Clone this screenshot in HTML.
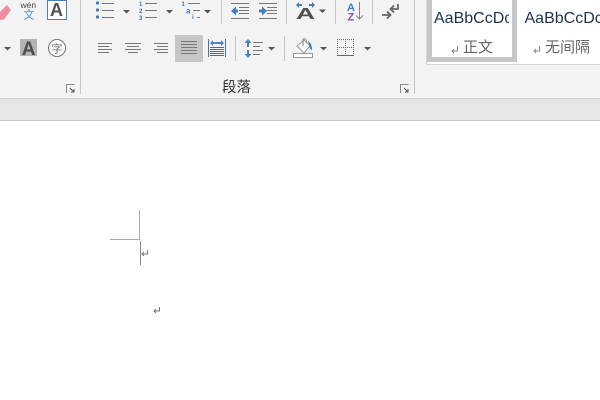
<!DOCTYPE html>
<html><head><meta charset="utf-8">
<style>
html,body{margin:0;padding:0;background:#fff;width:600px;height:400px;overflow:hidden}
svg{display:block}
text{font-family:"Liberation Sans","Noto Sans CJK SC",sans-serif}
</style></head>
<body>
<svg width="600" height="400" viewBox="0 0 600 400" xmlns="http://www.w3.org/2000/svg">
<defs>
<clipPath id="c1"><rect x="432" y="0" width="77" height="40"/></clipPath>
<clipPath id="c2"><rect x="522" y="0" width="78" height="40"/></clipPath>
</defs>
<rect width="600" height="400" fill="#fff"/>
<rect width="600" height="98" fill="#f3f3f3"/>
<rect y="98" width="600" height="1" fill="#d4d4d4"/>
<rect y="99" width="600" height="21" fill="#e6e6e6"/>
<rect y="120" width="600" height="1" fill="#c6c6c6"/>

<!-- separators -->
<g fill="#c6c6c6">
<rect x="80" y="0" width="1" height="94"/>
<rect x="414" y="0" width="1" height="94"/>
<rect x="221" y="0" width="1" height="24"/>
<rect x="286" y="0" width="1" height="24"/>
<rect x="335" y="0" width="1" height="24"/>
<rect x="372" y="0" width="1" height="24"/>
<rect x="235" y="36" width="1" height="25"/>
<rect x="284" y="36" width="1" height="25"/>
</g>

<!-- eraser -->
<path d="M0 12L7 5L11 10L4 19.500L0 20Z" fill="#ee8da0"/>
<!-- wen -->
<text x="20.500" y="8" font-size="8.500" fill="#444">wén</text>
<text x="23.500" y="18.500" font-size="11" fill="#5a90cc" font-family="Noto Sans CJK SC">文</text>
<!-- A box -->
<rect x="47.500" y="0.500" width="19" height="19" fill="#fff" stroke="#4a7ebb"/>
<text x="50" y="16" font-size="18" font-weight="bold" fill="#505050">A</text>
<!-- row 2 left -->
<path d="M4 47h7l-3.500 3.500z" fill="#555"/>
<rect x="20" y="39" width="17" height="17" fill="#b4b4b4"/>
<text x="21.700" y="55" font-size="19" font-weight="bold" fill="#4c4c4c">A</text>
<circle cx="57" cy="48" r="8.500" fill="#fff" stroke="#777" stroke-width="1"/>
<text x="51.500" y="52.500" font-size="11" fill="#666" font-family="Noto Sans CJK SC">字</text>
<!-- launcher -->
<g fill="none" stroke="#888">
<path d="M66.500 93v-8.500h8"/><path d="M400.500 93v-8.500h8"/>
</g>
<g fill="none" stroke="#555"><path d="M70 88l4 4M74 89v3h-3"/><path d="M404 88l4 4M408 89v3h-3"/></g>

<!-- bullets -->
<g fill="#3f78b5"><circle cx="97.500" cy="3" r="1.600"/><circle cx="97.500" cy="10" r="1.600"/><circle cx="97.500" cy="17" r="1.600"/></g>
<g fill="#777">
<rect x="102" y="3" width="12" height="1"/><rect x="102" y="10" width="12" height="1"/><rect x="102" y="17" width="12" height="1"/>
<rect x="145" y="3" width="12" height="1"/><rect x="145" y="10" width="12" height="1"/><rect x="145" y="17" width="12" height="1"/>
<rect x="188" y="3" width="12" height="1"/><rect x="193" y="10" width="7" height="1"/><rect x="197" y="17" width="3" height="1"/>
</g>
<g fill="#555">
<path d="M123 10h7l-3.500 3.500z"/>
<path d="M166 10h7l-3.500 3.500z"/>
<path d="M204 10h7l-3.500 3.500z"/>
</g>
<g fill="#3f78b5" font-weight="bold">
<text x="139" y="6" font-size="6">1</text><text x="139" y="13" font-size="6">2</text><text x="139" y="20" font-size="6">3</text>
<text x="181.500" y="6" font-size="6">1</text><text x="186" y="13.500" font-size="8">a</text><text x="192" y="19" font-size="6">i</text>
</g>

<!-- indent -->
<g fill="#777">
<rect x="231" y="3" width="18" height="1"/><rect x="239" y="7" width="10" height="1"/><rect x="239" y="10" width="10" height="1"/><rect x="239" y="13" width="10" height="1"/><rect x="231" y="18" width="18" height="1"/>
<rect x="259" y="3" width="18" height="1"/><rect x="267" y="7" width="10" height="1"/><rect x="267" y="10" width="10" height="1"/><rect x="267" y="13" width="10" height="1"/><rect x="259" y="18" width="18" height="1"/>
</g>
<path d="M231 11l5-4.500v3h2v3h-2v3z" fill="#3f7fc0"/>
<path d="M267 11l-5-4.500v3h-3v3h3v3z" fill="#3f7fc0"/>

<!-- A with arrows -->
<text x="296" y="19" font-size="16" font-weight="bold" fill="#505050" textLength="19" lengthAdjust="spacingAndGlyphs">A</text>
<path d="M296 5l3-3v2h3v2h-3v2zM315 5l-3-3v2h-3v2h3v2z" fill="#3f7fc0"/>
<path d="M319 9.500h7l-3.500 3.500z" fill="#555"/>

<!-- AZ sort -->
<text x="347" y="11" font-size="11" font-weight="bold" fill="#3f7fc0">A</text>
<text x="347.500" y="20.500" font-size="11" font-weight="bold" fill="#8a4fb0">Z</text>
<path d="M359.500 2v17M356 15.500l3.500 3.500 3.500-3.500" fill="none" stroke="#888"/>
<!-- pilcrow arrows -->
<path d="M398 4v5h-7M394 5.500l-3.500 3.500 3.500 3.500" fill="none" stroke="#666" stroke-width="1.800"/>
<path d="M382 15h8M387 11.500l3.500 3.500-3.500 3.500" fill="none" stroke="#666" stroke-width="1.800"/>

<!-- align -->
<rect x="175" y="35" width="28" height="27" fill="#c6c6c6"/>
<g fill="#777">
<rect x="98" y="43" width="14" height="1"/><rect x="98" y="46" width="11" height="1"/><rect x="98" y="49" width="14" height="1"/><rect x="98" y="52" width="11" height="1"/>
<rect x="125" y="43" width="16" height="1"/><rect x="127" y="46" width="12" height="1"/><rect x="125" y="49" width="16" height="1"/><rect x="128" y="52" width="10" height="1"/>
<rect x="154" y="43" width="14" height="1"/><rect x="157" y="46" width="11" height="1"/><rect x="154" y="49" width="14" height="1"/><rect x="157" y="52" width="11" height="1"/>
<rect x="181" y="41" width="16" height="1"/><rect x="181" y="44" width="16" height="1"/><rect x="181" y="47" width="16" height="1"/><rect x="181" y="50" width="16" height="1"/><rect x="181" y="53" width="16" height="1"/>
</g>
<!-- distributed -->
<rect x="208" y="39" width="1" height="18" fill="#3f78b5"/><rect x="225" y="39" width="1" height="18" fill="#3f78b5"/>
<path d="M210 43l3-3v2h8v-2l3 3-3 3v-2h-8v2z" fill="#4a86c5"/>
<g fill="#666"><rect x="210" y="47" width="14" height="1"/><rect x="210" y="49" width="14" height="1"/><rect x="210" y="51" width="14" height="1"/><rect x="210" y="53" width="14" height="1"/><rect x="210" y="55" width="14" height="1"/></g>
<!-- line spacing -->
<path d="M248 39l-3.500 4h2.500v4h2v-4h2.500zM248 58l-3.500-4h2.500v-4h2v4h2.500z" fill="#4a86c5"/>
<g fill="#777"><rect x="253" y="42" width="10" height="1"/><rect x="253" y="46" width="7" height="1"/><rect x="253" y="50" width="10" height="1"/><rect x="253" y="54" width="7" height="1"/></g>
<path d="M268 47h7l-3.500 3.500z" fill="#555"/>
<!-- fill -->
<path d="M297 46l7-6 6 6-6 7z" fill="#fff" stroke="#999"/>
<path d="M303 39v7" stroke="#777" fill="none"/>
<path d="M303 39q2-1 3 1l1 2" stroke="#999" fill="none"/>
<path d="M308 41q4 2 4 9l-2-1z" fill="#3f7fc0"/>
<rect x="293.500" y="53.500" width="19" height="4" fill="#fff" stroke="#999"/>
<path d="M320 47h7l-3.500 3.500z" fill="#555"/>
<!-- borders -->
<g fill="none" stroke="#666" stroke-dasharray="1 1">
<path d="M337 39.500h17M337 47.500h17M337.500 39v16M345.500 39v16M353.500 39v16"/>
</g>
<rect x="337" y="55" width="17" height="1" fill="#666"/>
<path d="M364 47h7l-3.500 3.500z" fill="#555"/>

<!-- 段落 -->
<text x="222" y="92" font-size="14.500" fill="#333">段落</text>

<!-- styles -->
<rect x="426" y="0" width="174" height="64" fill="#fff"/>
<rect x="426" y="64" width="174" height="1" fill="#d6d6d6"/>
<rect x="426" y="0" width="1" height="64" fill="#d6d6d6"/>
<path d="M429.500 0v59.500h85V0" fill="none" stroke="#c6c6c6" stroke-width="5"/>
<text x="434" y="23" font-size="16" fill="#1c3350" clip-path="url(#c1)">AaBbCcDc</text>
<text x="524.500" y="23" font-size="16" fill="#1c3350" clip-path="url(#c2)">AaBbCcDc</text>
<text x="463" y="52" font-size="15" fill="#666">正文</text>
<text x="545" y="52" font-size="15" fill="#666">无间隔</text>
<g fill="none" stroke="#888">
<path d="M457.500 46v5h-5M454 49l-2 2 2 2"/>
<path d="M539.500 46v5h-5M536 49l-2 2 2 2"/>
</g>

<!-- page marks -->
<rect x="139" y="210" width="1" height="30" fill="#aaa"/>
<rect x="110" y="239" width="30" height="1" fill="#aaa"/>
<rect x="140" y="241" width="1" height="24" fill="#888"/>
<g fill="none" stroke="#777">
<path d="M147.500 250v4h-5M144 252l-2 2 2 2"/>
<path d="M159.500 307v4h-5M156 309l-2 2 2 2"/>
</g>
</svg>
</body></html>
